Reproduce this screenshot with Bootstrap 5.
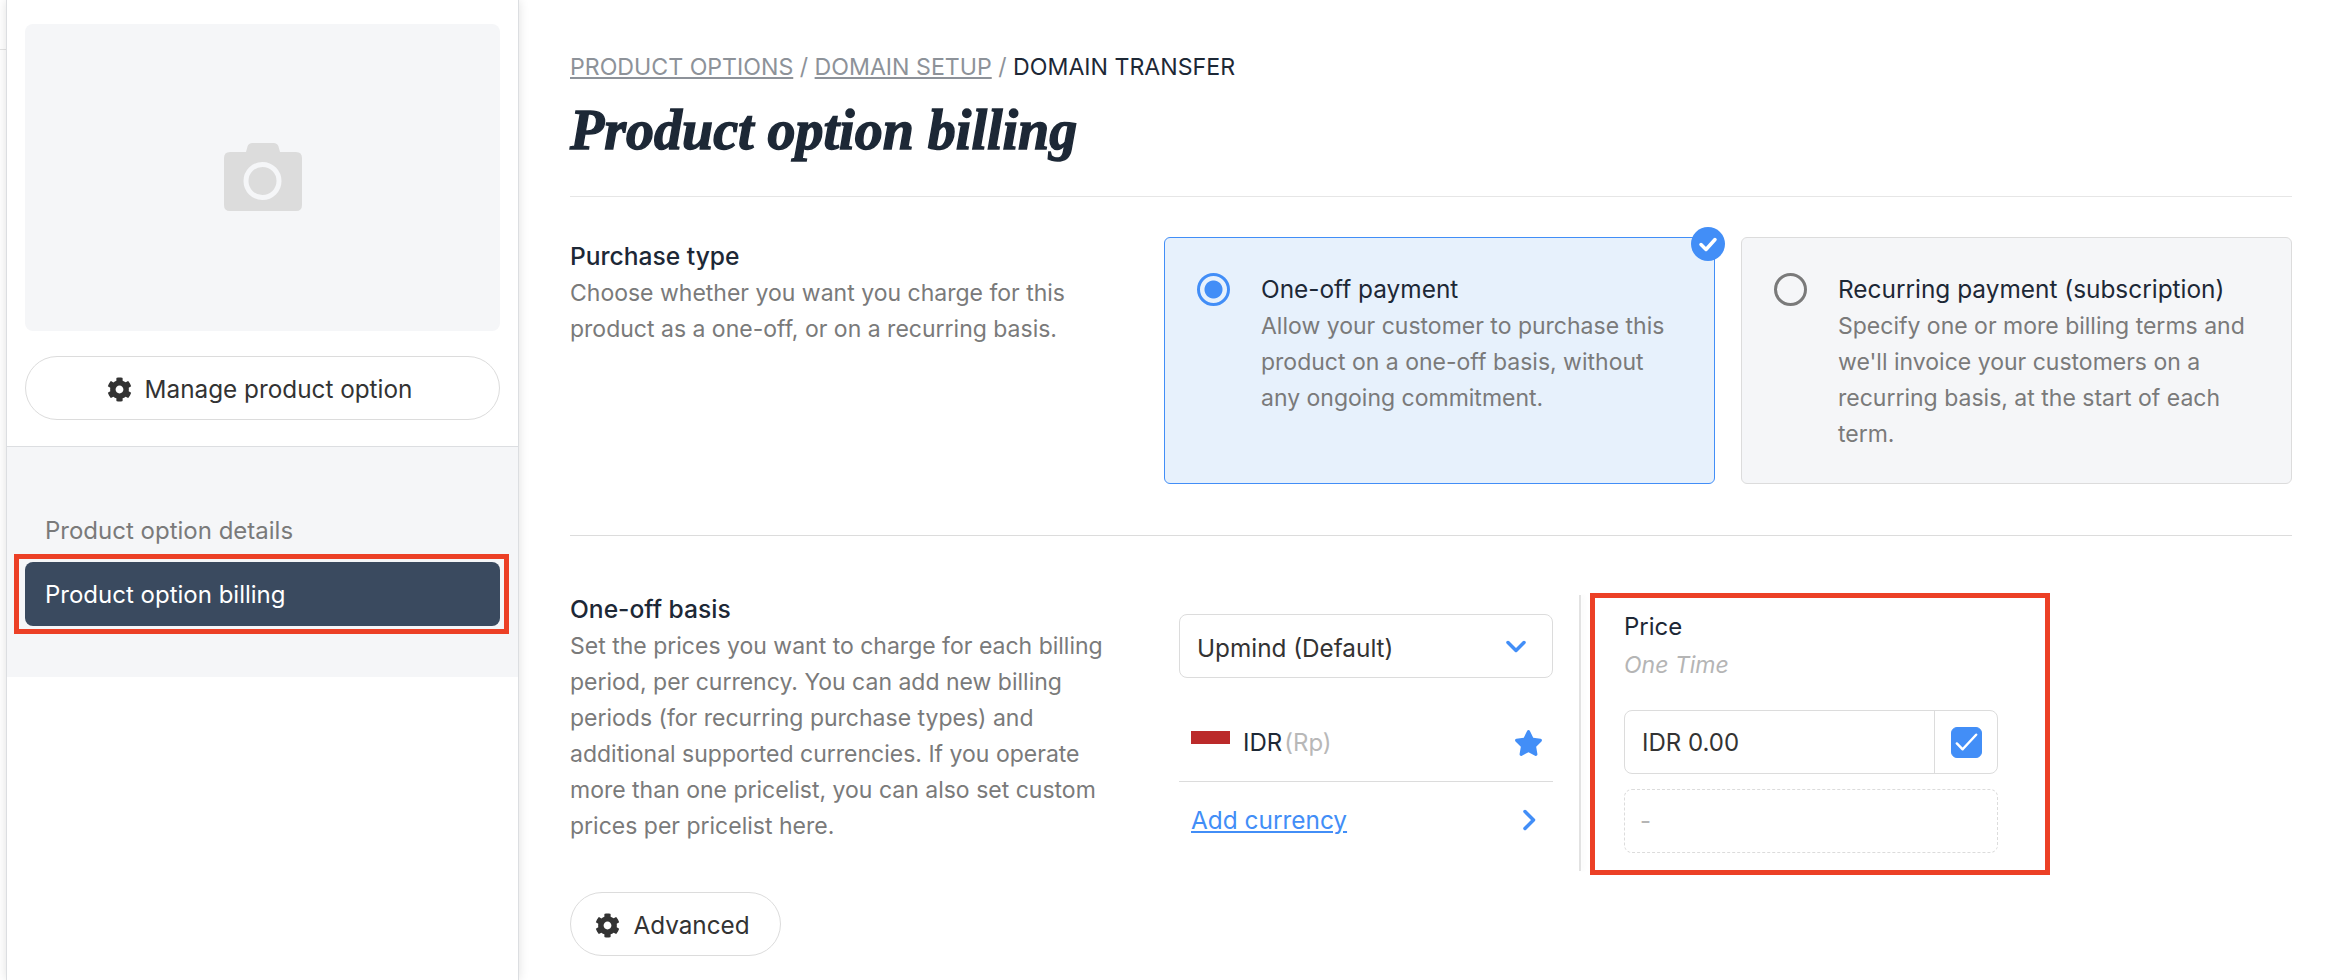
<!DOCTYPE html>
<html lang="en">
<head>
<meta charset="utf-8">
<title>Product option billing</title>
<link href="https://cdn.jsdelivr.net/npm/bootstrap@5.3.0/dist/css/bootstrap.min.css" rel="stylesheet">
<style>
html,body{height:980px;overflow:hidden;background:#fff}
body{font-family:Inter,"Liberation Sans",sans-serif;font-size:24px;line-height:36px;color:#1d2836}
.edge-strip{width:6px;flex:none}
.edge-strip i{display:block;height:1px;margin-top:49px;background:#e4e4e4}
.side-panel{width:513px;flex:none;height:980px;background:#fff;border-left:1px solid #dcdee1;border-right:1px solid #dcdee1;box-shadow:0 0 10px rgba(0,0,0,.12)}
.side-top{padding:24px 18px 26px 18px}
.photo-box{height:307px;background:#f5f6f8;border-radius:8px}
.photo-box svg{margin-bottom:2px}
.pill-btn{--bs-btn-font-size:24.3px;--bs-btn-line-height:36px;--bs-btn-color:#333;--bs-btn-border-color:#dcdcdc;--bs-btn-bg:#fff;--bs-btn-hover-bg:#fff;--bs-btn-hover-color:#333;--bs-btn-hover-border-color:#dcdcdc;height:64px;gap:13px;font-family:inherit;padding:2px 18px 0 12px}
.pill-btn svg{width:25px;height:25px;fill:#333}
.side-nav{background:#f5f6f8;border-top:1px solid #dcdee1;padding:51px 18px 51px}
.side-nav .nav-link{height:64px;padding:15px 20px 13px;font-size:24px;line-height:36px;border-radius:8px;color:#7a7a7a}
.side-nav .nav-link.active{background:#3a4a5f;color:#fff}
.mark-wrap{position:relative}
.mark-wrap::after{content:"";position:absolute;left:-11px;right:-9px;top:-8px;bottom:-8px;border:5px solid #ec4026;pointer-events:none}
.main-pane{padding:49px 40px 0 51px;min-width:0}
.crumbs{color:#8d9299;font-size:23.15px}
.crumbs a{color:#8d9299;text-decoration:underline}
.crumbs b{font-weight:400;color:#1d2836}
.page-title{font-family:"Liberation Serif",serif;font-style:italic;font-weight:700;font-size:56px;line-height:60px;margin:15px 0 36px;color:#1d2836;-webkit-text-stroke:1.4px #1d2836}
.sec-a{border-top:1px solid #e6e6e6;border-bottom:1px solid #dcdcdc;padding:40px 0 51px}
.left-col{width:594px;flex:none;padding:1px 40px 0 0}
.left-col p{margin:0;color:#7a7a7a;font-size:23px}
.left-col h2{font-size:24.6px;line-height:36px;font-weight:500;margin:0 0 1px}
.sec-b .left-col{margin-top:-1px}
.choice{flex:1 1 0;height:247px;position:relative;border:1px solid #dcdcdc;border-radius:6px;background:#f5f6f8;padding:33px 36px 0 32px;gap:31px}
.choice.on{background:#e7f1fc;border-color:#428ef7}
.choice h3{font-size:24.4px;line-height:36px;font-weight:400;margin:0;color:#1d2836}
.choice p{margin:0 0 0;padding-top:1px;color:#7a7a7a;font-size:23px}
.choice .form-check-input{width:33px;height:33px;margin:2px 0 0;flex:none;background-color:transparent;background-image:none;border:3px solid #7a7a7a}
.choice .form-check-input:checked{border-color:#428ef7;background-color:transparent;background-image:radial-gradient(circle,#428ef7 0,#428ef7 8.5px,transparent 9.5px)}
.tick-badge{position:absolute;top:-11px;right:-11px;width:34px;height:34px;border-radius:50%;background:#428ef7}
.tick-badge svg{width:34px;height:34px;display:block}
.sec-b{padding-top:55px}
.mid-col{width:374px;margin:23px 0 0;flex:none}
.mid-wrap{margin-left:15px}
.form-select.ploy{height:64px;border-color:#dcdcdc;border-radius:8px;font-size:24.3px;line-height:36px;color:#333;padding:15px 17px 11px;font-family:inherit;background-image:none;cursor:pointer}
.sel-box{position:relative}
.sel-box svg{position:absolute;right:27px;top:26px;width:20px;height:13px;pointer-events:none}
.cur-row{height:104px;border-bottom:1px solid #dcdcdc;padding:47px 10px 0 12px}
.flag-stripe{width:39px;height:13px;background:#bb2a2a;margin:6px 13px 0 0;align-self:flex-start}
.cur-row .sym{color:#b8b8b8;margin-left:2px}
.cur-row svg{width:29px;height:26px;margin-left:auto;fill:#428ef7;margin-top:5px}
.add-row{padding:20px 17px 0 12px}
.add-row a{color:#428ef7;text-decoration:underline;font-size:24.4px}
.add-row svg{width:14px;height:22px;margin-left:auto}
.v-rule{width:2px;height:276px;background:#e2e2e2;margin:4px 0 0 26px;flex:none;box-shadow:3px 0 4px rgba(0,0,0,.04)}
.price-box{width:460px;height:282px;margin:2px 0 0 9px;border:5px solid #ec4026;padding:11px 47px 0 29px;flex:none}
.price-box .sub{color:#b5b5b5;font-style:italic;margin-top:2px;font-size:23px}
.price-grp{margin-top:27px;height:64px;border:1px solid #dcdcdc;border-radius:8px}
.price-grp .form-control{border:0;background:transparent;font-size:24px;line-height:36px;color:#333;padding:13px 17px;height:62px;border-radius:8px 0 0 8px;font-family:inherit;box-shadow:none}
.chk-cell{width:63px;flex:none;border-left:1px solid #dcdcdc}
.chk-cell .form-check-input{width:31px;height:31px;margin:0;border-radius:6px;background-color:#428ef7;border-color:#428ef7;background-size:100% 100%;background-image:url("data:image/svg+xml,%3csvg xmlns='http://www.w3.org/2000/svg' viewBox='0 0 30 30'%3e%3cpath d='M5 16l6 6 14-15' fill='none' stroke='%23fff' stroke-width='2.6' stroke-linecap='round' stroke-linejoin='round'/%3e%3c/svg%3e")}
.dash-box{margin-top:15px;height:64px;border:1px dashed #dcdcdc;border-radius:8px;color:#b5b5b5;padding:13px 15px}
.adv-btn{margin-top:48px;width:211px}
</style>
</head>
<body class="d-flex">
<div class="edge-strip"><i></i></div>
<aside class="side-panel d-flex flex-column">
  <div class="side-top">
    <div class="photo-box d-flex align-items-center justify-content-center">
      <svg width="78" height="68" viewBox="0 0 78 68" aria-hidden="true"><path fill="#dcdcdc" d="M6 9h16l1.500-5.500Q24.500 0 28.500 0h21q4 0 5 3.500L56 9h16q6 0 6 6v47q0 6-6 6H6q-6 0-6-6V15q0-6 6-6z"/><circle cx="38.500" cy="38" r="16.500" fill="none" stroke="#f5f6f8" stroke-width="5"/></svg>
    </div>
    <button type="button" class="btn pill-btn rounded-pill w-100 d-flex align-items-center justify-content-center" style="margin-top:25px">
      <svg viewBox="0 0 512 512" aria-hidden="true"><path d="M487.400 315.700l-42.600-24.600c4.300-23.200 4.300-47 0-70.200l42.600-24.600c4.900-2.800 7.100-8.600 5.500-14-11.100-35.600-30-67.800-54.700-94.600-3.800-4.100-10-5.100-14.800-2.300L380.800 110c-17.900-15.400-38.500-27.300-60.800-35.100V25.800c0-5.600-3.900-10.500-9.400-11.700-36.700-8.200-74.300-7.800-109.200 0-5.500 1.200-9.400 6.100-9.400 11.700V75c-22.200 7.900-42.800 19.800-60.800 35.100L88.700 85.500c-4.900-2.800-11-1.900-14.800 2.300-24.700 26.700-43.600 58.900-54.700 94.600-1.700 5.400.6 11.200 5.500 14L67.300 221c-4.300 23.200-4.300 47 0 70.200l-42.600 24.600c-4.900 2.800-7.100 8.600-5.500 14 11.100 35.600 30 67.800 54.700 94.600 3.800 4.100 10 5.100 14.800 2.300l42.600-24.600c17.900 15.400 38.500 27.300 60.800 35.100v49.200c0 5.600 3.900 10.500 9.400 11.700 36.700 8.200 74.300 7.800 109.200 0 5.500-1.200 9.400-6.100 9.400-11.700v-49.200c22.200-7.900 42.800-19.800 60.800-35.100l42.600 24.600c4.900 2.800 11 1.900 14.800-2.300 24.700-26.700 43.600-58.900 54.700-94.600 1.500-5.500-.7-11.300-5.600-14.100zM256 336c-44.100 0-80-35.900-80-80s35.900-80 80-80 80 35.900 80 80-35.900 80-80 80z"/></svg>
      Manage product option
    </button>
  </div>
  <nav class="side-nav nav nav-pills flex-column">
    <a class="nav-link" href="#">Product option details</a>
    <div class="mark-wrap"><a class="nav-link active" href="#">Product option billing</a></div>
  </nav>
</aside>
<main class="main-pane flex-grow-1">
  <div class="crumbs"><a href="#">PRODUCT OPTIONS</a> / <a href="#">DOMAIN SETUP</a> / <b>DOMAIN TRANSFER</b></div>
  <h1 class="page-title">Product option billing</h1>
  <section class="sec-a d-flex">
    <div class="left-col">
      <h2>Purchase type</h2>
      <p>Choose whether you want you charge for this product as a one-off, or on a recurring basis.</p>
    </div>
    <div class="d-flex flex-grow-1" style="gap:26px">
      <label class="choice on d-flex">
        <input class="form-check-input" type="radio" name="ptype" checked>
        <span><h3>One-off payment</h3><p>Allow your customer to purchase this product on a one-off basis, without any ongoing commitment.</p></span>
        <span class="tick-badge"><svg viewBox="0 0 34 34" aria-hidden="true"><path d="M10 17.500l5 5 9-10" fill="none" stroke="#fff" stroke-width="3.500" stroke-linecap="round" stroke-linejoin="round"/></svg></span>
      </label>
      <label class="choice d-flex">
        <input class="form-check-input" type="radio" name="ptype">
        <span><h3>Recurring payment (subscription)</h3><p>Specify one or more billing terms and we'll invoice your customers on a recurring basis, at the start of each term.</p></span>
      </label>
    </div>
  </section>
  <section class="sec-b d-flex">
    <div class="left-col">
      <h2>One-off basis</h2>
      <p>Set the prices you want to charge for each billing period, per currency. You can add new billing periods (for recurring purchase types) and additional supported currencies. If you operate more than one pricelist, you can also set custom prices per pricelist here.</p>
      <button type="button" class="btn pill-btn rounded-pill d-flex align-items-center justify-content-center adv-btn">
        <svg viewBox="0 0 512 512" aria-hidden="true"><path d="M487.400 315.700l-42.600-24.600c4.300-23.200 4.300-47 0-70.200l42.600-24.600c4.900-2.800 7.100-8.600 5.500-14-11.100-35.600-30-67.800-54.700-94.600-3.800-4.100-10-5.100-14.800-2.300L380.800 110c-17.900-15.400-38.500-27.300-60.800-35.100V25.800c0-5.600-3.900-10.500-9.400-11.700-36.700-8.200-74.300-7.800-109.200 0-5.500 1.200-9.400 6.100-9.400 11.700V75c-22.200 7.900-42.800 19.800-60.800 35.100L88.700 85.500c-4.900-2.800-11-1.900-14.800 2.300-24.700 26.700-43.600 58.900-54.700 94.600-1.700 5.400.6 11.200 5.500 14L67.300 221c-4.300 23.200-4.300 47 0 70.200l-42.600 24.600c-4.900 2.800-7.100 8.600-5.500 14 11.100 35.600 30 67.800 54.700 94.600 3.800 4.100 10 5.100 14.800 2.300l42.600-24.600c17.900 15.400 38.500 27.300 60.800 35.100v49.200c0 5.600 3.900 10.500 9.400 11.700 36.700 8.200 74.300 7.800 109.200 0 5.500-1.200 9.400-6.100 9.400-11.700v-49.200c22.200-7.900 42.800-19.800 60.800-35.100l42.600 24.600c4.900 2.800 11 1.900 14.800-2.300 24.700-26.700 43.600-58.900 54.700-94.600 1.500-5.500-.7-11.300-5.600-14.100zM256 336c-44.100 0-80-35.900-80-80s35.900-80 80-80 80 35.900 80 80-35.900 80-80 80z"/></svg>
        Advanced
      </button>
    </div>
    <div class="mid-wrap d-flex">
      <div class="mid-col">
        <div class="sel-box">
          <select class="form-select ploy"><option>Upmind (Default)</option></select>
          <svg viewBox="0 0 20 13" aria-hidden="true"><path d="M2 2.500l8 8 8-8" fill="none" stroke="#428ef7" stroke-width="3.500" stroke-linecap="round" stroke-linejoin="round"/></svg>
        </div>
        <div class="cur-row d-flex">
          <span class="flag-stripe"></span>
          <span>IDR<span class="sym">(Rp)</span></span>
          <svg viewBox="0 0 576 512" aria-hidden="true"><path d="M259.300 17.800L194 150.200 47.900 171.500c-26.200 3.800-36.700 36.100-17.700 54.600l105.700 103-25 145.500c-4.500 26.300 23.200 46 46.400 33.700L288 439.600l130.700 68.700c23.200 12.200 50.900-7.400 46.400-33.700l-25-145.500 105.700-103c19-18.500 8.500-50.800-17.700-54.600L382 150.200 316.700 17.800c-11.700-23.600-45.600-23.900-57.400 0z"/></svg>
        </div>
        <div class="add-row d-flex align-items-center">
          <a href="#">Add currency</a>
          <svg viewBox="0 0 14 22" aria-hidden="true"><path d="M3 2.500l8.500 8.500L3 19.500" fill="none" stroke="#428ef7" stroke-width="3.500" stroke-linecap="round" stroke-linejoin="round"/></svg>
        </div>
      </div>
      <div class="v-rule"></div>
      <div class="price-box">
        <div>Price</div>
        <div class="sub">One Time</div>
        <div class="price-grp d-flex">
          <input class="form-control" type="text" value="IDR 0.00" aria-label="Price">
          <div class="chk-cell d-flex align-items-center justify-content-center"><input class="form-check-input" type="checkbox" checked aria-label="Enable"></div>
        </div>
        <div class="dash-box">-</div>
      </div>
    </div>
  </section>
</main>
</body>
</html>
